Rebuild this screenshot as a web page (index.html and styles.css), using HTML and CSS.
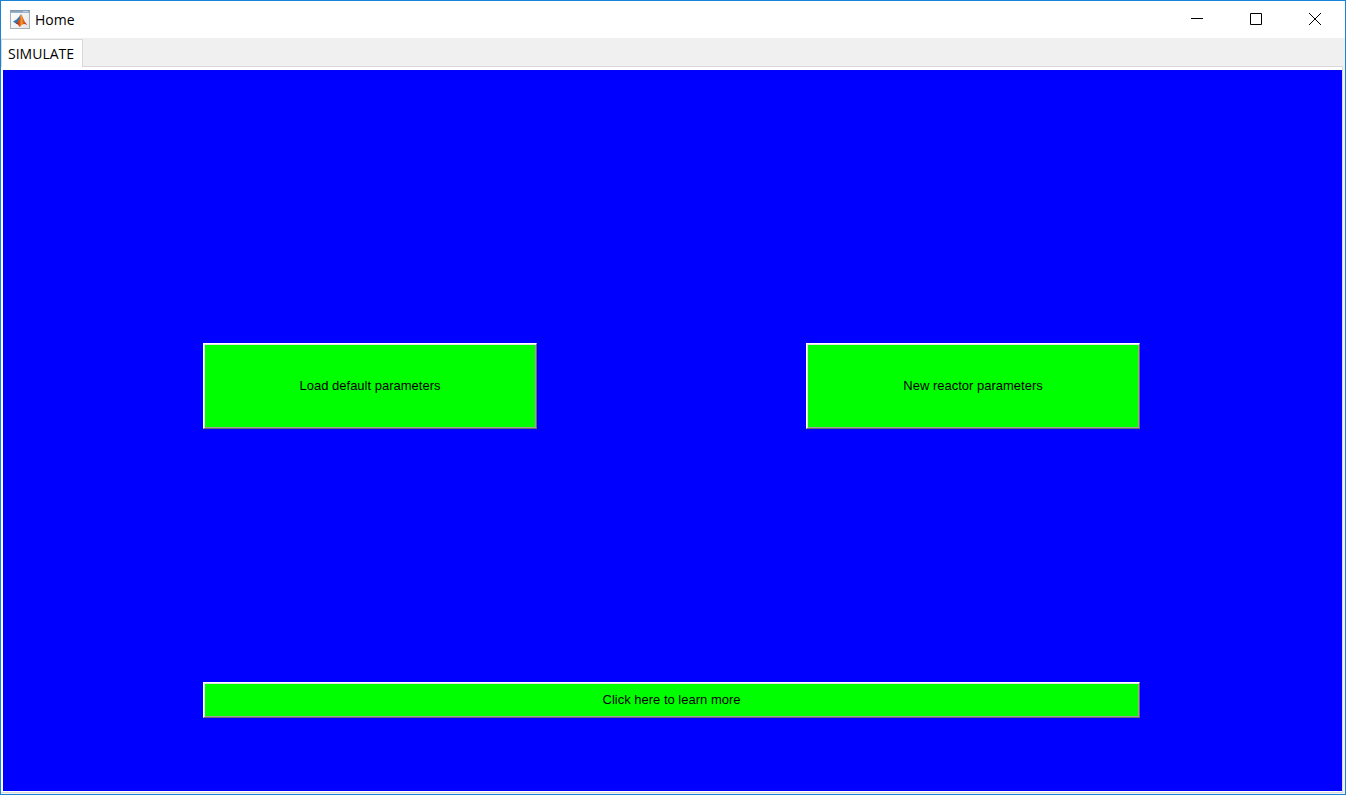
FILE: index.html
```html
<!DOCTYPE html>
<html lang="en">
<head>
<meta charset="utf-8">
<title>Home</title>
<link rel="stylesheet" href="styles.css">
</head>
<body>
<div class="window">
  <header class="titlebar">
    <svg class="app-icon" viewBox="0 0 20 20" aria-hidden="true">
      <defs>
        <linearGradient id="bar" x1="0" x2="0" y1="0" y2="1"><stop offset="0" stop-color="#7d94a8"/><stop offset="1" stop-color="#9db8d0"/></linearGradient>
        <linearGradient id="face" x1="0" x2="1" y1="0" y2="1"><stop offset="0" stop-color="#fff"/><stop offset="1" stop-color="#e3e6e8"/></linearGradient>
        <linearGradient id="flame" x1="0" x2="1"><stop offset="0" stop-color="#7c2418"/><stop offset=".3" stop-color="#d9531c"/><stop offset=".5" stop-color="#f79a2a"/><stop offset=".7" stop-color="#d9531c"/><stop offset="1" stop-color="#a82a10"/></linearGradient>
      </defs>
      <rect x=".5" y=".5" width="19" height="18" fill="url(#face)" stroke="#a9afb4"/>
      <rect width="20" height="3" fill="url(#bar)"/>
      <rect x="13" y="1" width="5" height="1" fill="#c3d2df"/>
      <path d="M3 11.500 L6.500 9.500 Q9 7.500 11 4 L10 10 L6.500 14Z" fill="#3776ad"/>
      <path d="M6 13.500 Q9 12 11.200 4 Q12.300 5 13.300 8.500 Q14.800 13 17.300 15 Q14 13.500 12.500 14.500 L9.500 17 Q8.500 14 6 13.500Z" fill="url(#flame)"/>
    </svg>
    <h1 class="title">Home</h1>
    <div class="controls">
      <button class="control" type="button" aria-label="Minimize"><svg viewBox="0 0 12 12"><path d="M0 5.500H12"/></svg></button>
      <button class="control" type="button" aria-label="Maximize"><svg viewBox="0 0 12 12"><path d="M.5.500H11.500V11.500H.5Z"/></svg></button>
      <button class="control" type="button" aria-label="Close"><svg viewBox="0 0 12 12"><path d="M0 0L12 12M12 0L0 12"/></svg></button>
    </div>
  </header>
  <nav class="tabs" role="tablist">
    <button class="tab" type="button" role="tab" aria-selected="true">SIMULATE</button>
  </nav>
  <main class="page">
    <div class="panel">
      <button class="action load" type="button">Load default parameters</button>
      <button class="action create" type="button">New reactor parameters</button>
      <button class="action learn" type="button">Click here to learn more</button>
    </div>
  </main>
</div>
</body>
</html>
```
FILE: styles.css
```css
* { box-sizing: border-box; }

body { margin: 0; }

.window {
  display: flex;
  flex-direction: column;
  height: 100vh;
  border: 1px solid #1883d7;
  background: #f0f0f0;
  color: #000;
  font-family: "Open Sans", "Noto Sans", sans-serif;
  font-size: 14px;
}

.titlebar {
  display: flex;
  align-items: center;
  height: 37px;
  padding-left: 9px;
  background: #fff;
}

.app-icon {
  width: 20px;
  height: 20px;
}

.title {
  margin: 0 auto 0 5px;
  font-size: 14px;
  font-weight: 400;
  line-height: 20px;
}

.controls {
  display: flex;
  align-self: stretch;
  padding: 0 1px 2px 0;
}

.control {
  display: flex;
  align-items: center;
  justify-content: center;
  width: 59px;
  padding: 0;
  border: 0;
  background: none;
}

.control svg {
  width: 12px;
  height: 12px;
  fill: none;
  stroke: #000;
  overflow: visible;
}

.tabs {
  display: flex;
  height: 28px;
}

.tab {
  margin: 1px 0 -1px;
  padding: 0 8px 0 6px;
  border: 1px solid #d9d9d9;
  border-bottom: 0;
  background: #fff;
  color: #000;
  font: inherit;
  line-height: 20px;
  z-index: 1;
}

.page {
  display: flex;
  flex: 1;
  margin: 0 2px 1px 0;
  padding: 3px 0 1px 2px;
  border: 1px solid #d9d9d9;
  border-left: 0;
  background: #fff;
}

.panel {
  display: grid;
  flex: 1;
  grid-template-columns: 200fr 334fr 269fr 334fr 202fr;
  grid-template-rows: 273fr 86fr 253fr 36fr 73fr;
  background: #00f;
}

.action {
  min-height: 0;
  padding: 0;
  border: 1px solid;
  border-color: #fff #696969 #696969 #fff;
  background: #0f0;
  box-shadow: inset 1px 1px #e3e3e3, inset -1px -1px #a0a0a0;
  color: #000;
  font: 13px/16px "Liberation Sans", Arial, sans-serif;
}

.load { grid-area: 2 / 2; }
.create { grid-area: 2 / 4; }
.learn { grid-area: 4 / 2 / 5 / 5; }
```
